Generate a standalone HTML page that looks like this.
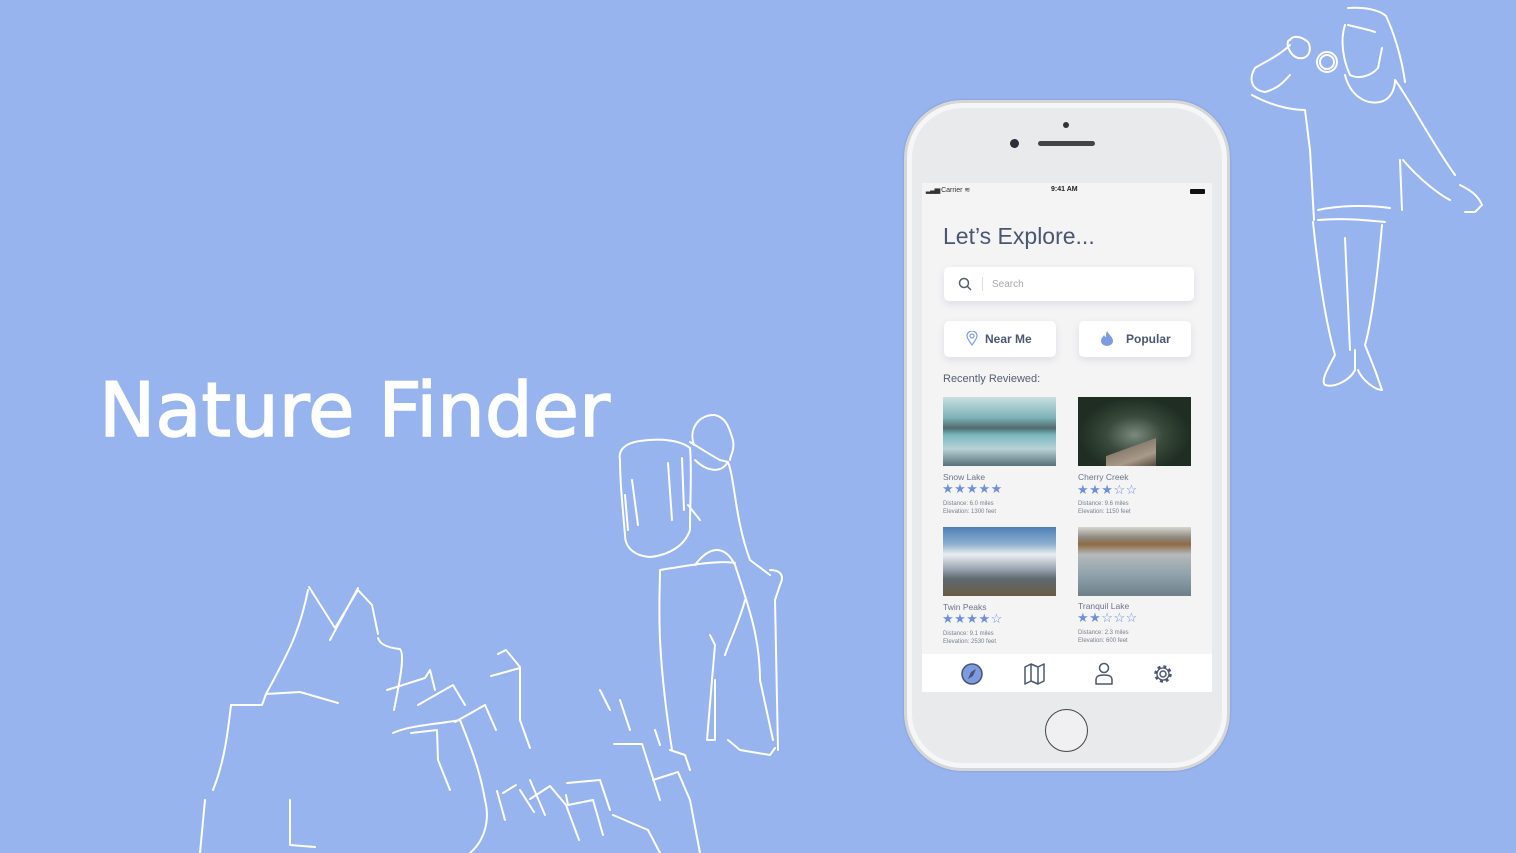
<!DOCTYPE html>
<html><head><meta charset="utf-8"><style>
*{margin:0;padding:0;box-sizing:border-box}
body{width:1516px;height:853px;background:#98b4ee;position:relative;overflow:hidden;font-family:"Liberation Sans",sans-serif}
.abs{position:absolute}
.phone{left:904px;top:100px;width:326px;height:671px;border-radius:58px;background:#e9eaec;border:3px solid #d4d6d9;box-shadow:inset 0 0 0 5px #f6f6f7,0 0 2px rgba(0,0,0,.2)}
.screen{left:922px;top:183px;width:290px;height:509px;background:#f4f4f5;overflow:hidden}
.t{position:absolute;white-space:nowrap}
.card{position:absolute;background:#fff;border-radius:5px;box-shadow:0 3px 8px rgba(60,70,100,.12)}
.img{position:absolute;width:113px;height:69px}
.name{font-size:8.5px;color:#6b7488}
.stars{font-size:13px;color:#6f8fd8;letter-spacing:0.5px;line-height:13px}
.info{font-size:6px;color:#7a8090;line-height:8px}
</style></head><body>

<svg class="abs" style="left:0;top:0" width="1516" height="853">
<text x="99" y="436" font-family="DejaVu Sans, sans-serif" font-size="75" fill="#fff" stroke="#fff" stroke-width="1.6" textLength="511" lengthAdjust="spacingAndGlyphs">Nature Finder</text>
<g fill="none" stroke="#fff" stroke-width="2" stroke-linecap="round" stroke-linejoin="round">
<path d="M213,790 C225,760 228,730 231,705 L262,705 L266,694 L300,692 L338,703"/>
<path d="M266,694 C290,650 300,630 308,590"/>
<path d="M309,587 L335,628 L358,590 L372,605 L378,634"/>
<path d="M330,640 L358,588"/>
<path d="M378,638 C380,645 390,648 400,649 C405,655 400,680 394,710"/>
<path d="M387,690 L425,678 L430,670 L435,690"/>
<path d="M418,705 L453,685 L465,705"/>
<path d="M455,722 L485,705 L496,730"/>
<path d="M491,676 L520,668 L520,720 L530,748"/>
<path d="M411,733 L437,730 L438,760 L450,790"/>
<path d="M498,654 L506,650 L520,667"/>
<path d="M205,800 L200,853"/>
<path d="M290,800 L290,845 L315,847"/>
<path d="M393,733 C410,725 440,724 460,720 C470,745 480,770 485,800 C490,820 485,840 470,853"/>
<path d="M497,791 L505,820"/>
<path d="M503,793 L516,785"/>
<path d="M520,790 L534,812"/>
<path d="M530,780 L545,815"/>
<path d="M530,799 L550,786 L566,805 L579,840"/>
<path d="M566,795 L568,805 L593,800 L603,835"/>
<path d="M567,783 L600,780 L610,810"/>
<path d="M614,744 L642,744 L660,800"/>
<path d="M653,780 L678,772 L690,800 L700,853"/>
<path d="M613,815 L648,830 L660,853"/>
<path d="M600,690 L610,710 M620,700 L630,730 M655,730 L660,745"/>
<path d="M694,445 C688,428 700,414 715,415 C728,418 730,432 733,440 C735,450 730,456 730,460"/>
<path d="M690,442 C700,448 712,456 720,460 L728,462"/>
<path d="M620,460 C618,450 625,443 640,441 C660,438 680,440 690,448 C692,470 690,500 690,530 C685,545 670,555 650,557 C635,556 625,548 625,535 C622,500 620,480 620,460Z"/>
<path d="M632,480 L638,525 M625,495 L628,530 M682,458 L684,510 M668,463 L672,520"/>
<path d="M695,460 C705,470 720,475 728,462 C735,480 735,520 750,560 L770,575"/>
<path d="M660,570 C660,600 655,640 672,750 M688,505 L700,520 M695,565 C710,545 725,545 735,565 C750,610 760,640 760,680 L773,740"/>
<path d="M660,570 C690,565 720,560 735,563"/>
<path d="M670,750 L685,755 L690,770 M728,740 L740,750 L770,755 L775,748"/>
<path d="M710,635 L715,645 L712,680 L707,740 L715,740 L715,680"/>
<path d="M770,570 C780,570 785,575 780,585 L775,600 L778,750"/>
<path d="M725,655 C730,640 740,620 745,600"/>
<path d="M1348,8 C1365,7 1380,10 1386,16 C1395,35 1402,60 1405,82"/>
<path d="M1345,25 C1340,40 1343,60 1350,75 C1360,80 1372,75 1378,68 L1382,48"/>
<path d="M1348,25 C1360,28 1370,30 1375,32"/>
<circle cx="1327" cy="62" r="10"/>
<circle cx="1327" cy="62" r="7"/>
<path d="M1290,40 C1285,40 1288,55 1298,58 C1310,60 1312,48 1308,42 C1300,35 1292,36 1290,40Z"/>
<path d="M1290,45 C1280,55 1265,62 1255,68 C1248,80 1252,90 1265,92 C1280,88 1285,80 1290,75"/>
<path d="M1252,95 C1270,105 1290,110 1305,110 L1310,150 L1314,220"/>
<path d="M1345,75 C1350,95 1365,105 1380,102 C1390,100 1395,90 1395,80 C1410,100 1430,140 1455,175"/>
<path d="M1400,160 L1402,210 M1403,160 C1420,180 1440,195 1450,200 M1460,185 C1470,190 1478,195 1482,205 L1475,212 L1465,212"/>
<path d="M1318,210 C1340,205 1370,205 1390,208 M1318,220 C1345,218 1365,220 1385,222"/>
<path d="M1313,222 C1318,270 1325,320 1335,355 C1330,365 1320,380 1325,385 C1335,388 1350,380 1355,370 L1355,350"/>
<path d="M1345,238 L1350,350 M1382,225 C1378,270 1372,320 1365,345 L1375,370 L1382,390 C1375,390 1362,380 1358,370"/>
</g>
</svg>

<div class="abs phone"></div>
<div class="abs" style="left:1063px;top:122px;width:6px;height:6px;border-radius:50%;background:#333"></div>
<div class="abs" style="left:1010px;top:139px;width:9px;height:9px;border-radius:50%;background:#2a2f3a"></div>
<div class="abs" style="left:1038px;top:141px;width:57px;height:5px;border-radius:3px;background:#444"></div>
<div class="abs" style="left:1045px;top:709px;width:43px;height:43px;border-radius:50%;border:1.5px solid #444;background:#f0f0f2"></div>

<div class="abs screen">
 <div class="t" style="left:4px;top:3px;font-size:7px;color:#333"><b style="letter-spacing:-1px">▂▃▅</b> Carrier ≋</div>
 <div class="t" style="left:129px;top:3px;font-size:7px;font-weight:bold;color:#222">9:41 AM</div>
 <div class="abs" style="left:268px;top:6px;width:15px;height:5px;background:#111;border-radius:1px"></div>
 <div class="t" style="left:21px;top:40px;font-size:23px;color:#4b5670">Let’s Explore...</div>
 <div class="card" style="left:22px;top:84px;width:250px;height:34px">
  <svg class="abs" style="left:14px;top:10px" width="14" height="14"><circle cx="6" cy="6" r="4.5" fill="none" stroke="#555d70" stroke-width="1.5"/><path d="M9.5,9.5 L13,13" stroke="#555d70" stroke-width="1.5"/></svg>
  <div class="abs" style="left:38px;top:10px;width:1px;height:14px;background:#ddd"></div>
  <div class="t" style="left:48px;top:12px;font-size:10px;color:#aaa">Search</div>
 </div>
 <div class="card" style="left:22px;top:138px;width:112px;height:36px">
  <svg class="abs" style="left:22px;top:10px" width="12" height="15"><path d="M6,14 C3,10 1,7 1,5 A5,5 0 0 1 11,5 C11,7 9,10 6,14Z M6,3 A2,2 0 1 0 6.01,3" fill="none" stroke="#7d9be0" stroke-width="1.2"/></svg>
  <div class="t" style="left:41px;top:11px;font-size:12px;font-weight:bold;color:#4b5670">Near Me</div>
 </div>
 <div class="card" style="left:157px;top:138px;width:112px;height:36px">
  <svg class="abs" style="left:21px;top:9px" width="14" height="16"><path d="M7,1 C9,5 13,7 13,11 A6,5 0 0 1 1,11 C1,8 3,7 4,5 C5,7 6,7 6,7 C6,5 6,3 7,1Z" fill="#7d9be0"/></svg>
  <div class="t" style="left:47px;top:11px;font-size:12px;font-weight:bold;color:#4b5670">Popular</div>
 </div>
 <div class="t" style="left:21px;top:190px;font-size:11px;color:#555d70">Recently Reviewed:</div>

 <div class="img" style="left:21px;top:214px;background:linear-gradient(180deg,#c9dfe0 0%,#7fb2b7 30%,#4f6a6e 45%,#7ab7bd 55%,#b8d3d6 75%,#58707a 100%)"></div>
 <div class="t name" style="left:21px;top:289px">Snow Lake</div>
 <div class="t stars" style="left:20px;top:299px">★★★★★</div>
 <div class="t info" style="left:21px;top:317px">Distance: 6.0 miles<br>Elevation: 1300 feet</div>

 <div class="img" style="left:156px;top:214px;background:radial-gradient(ellipse at 50% 55%,#7a8a7e 0%,#3a4a3c 35%,#1f2d22 70%);"><div class="abs" style="left:28px;top:40px;width:50px;height:29px;background:linear-gradient(160deg,transparent 40%,#8b7e70 41%,#a9998a 70%,#554a3f)"></div></div>
 <div class="t name" style="left:156px;top:289px">Cherry Creek</div>
 <div class="t stars" style="left:155px;top:300px">★★★☆☆</div>
 <div class="t info" style="left:156px;top:317px">Distance: 9.6 miles<br>Elevation: 1150 feet</div>

 <div class="img" style="left:21px;top:344px;background:linear-gradient(180deg,#4d7fb6 0%,#8fb0cf 25%,#e8eef3 40%,#9fa9b3 60%,#5d6a70 75%,#6b5b45 100%)"></div>
 <div class="t name" style="left:21px;top:419px">Twin Peaks</div>
 <div class="t stars" style="left:20px;top:429px">★★★★☆</div>
 <div class="t info" style="left:21px;top:447px">Distance: 9.1 miles<br>Elevation: 2530 feet</div>

 <div class="img" style="left:156px;top:344px;background:linear-gradient(180deg,#d8d6d2 0%,#8f8a80 15%,#8e6a45 25%,#b5b9bb 40%,#8fa2ab 70%,#6d7f88 100%)"></div>
 <div class="t name" style="left:156px;top:418px">Tranquil Lake</div>
 <div class="t stars" style="left:155px;top:428px">★★☆☆☆</div>
 <div class="t info" style="left:156px;top:446px">Distance: 2.3 miles<br>Elevation: 600 feet</div>

 <div class="abs" style="left:0;top:471px;width:290px;height:38px;background:#fff"></div>
 <svg class="abs" style="left:0;top:471px" width="290" height="38">
  <circle cx="50" cy="20" r="10" fill="#7d9be0" stroke="#4b5670" stroke-width="1.5"/>
  <path d="M54,15 L51,22 L46,25 L49,18Z" fill="#4b5670"/>
  <path d="M103,13 L109,10 L116,13 L122,10 L122,27 L116,30 L109,27 L103,30Z M109,10 L109,27 M116,13 L116,30" fill="none" stroke="#4b5670" stroke-width="1.5" stroke-linejoin="round"/>
  <circle cx="182" cy="14" r="4.5" fill="none" stroke="#4b5670" stroke-width="1.5"/>
  <path d="M174,30 L174,26 C174,22 177,21 182,21 C187,21 190,22 190,26 L190,30Z" fill="none" stroke="#4b5670" stroke-width="1.5" stroke-linejoin="round"/>
  <circle cx="241" cy="20" r="3" fill="none" stroke="#4b5670" stroke-width="1.5"/>
  <circle cx="241" cy="20" r="7.5" fill="none" stroke="#4b5670" stroke-width="2.5" stroke-dasharray="3 2.9"/>
  <circle cx="241" cy="20" r="6" fill="none" stroke="#4b5670" stroke-width="1.3"/>
 </svg>
</div>
</body></html>
